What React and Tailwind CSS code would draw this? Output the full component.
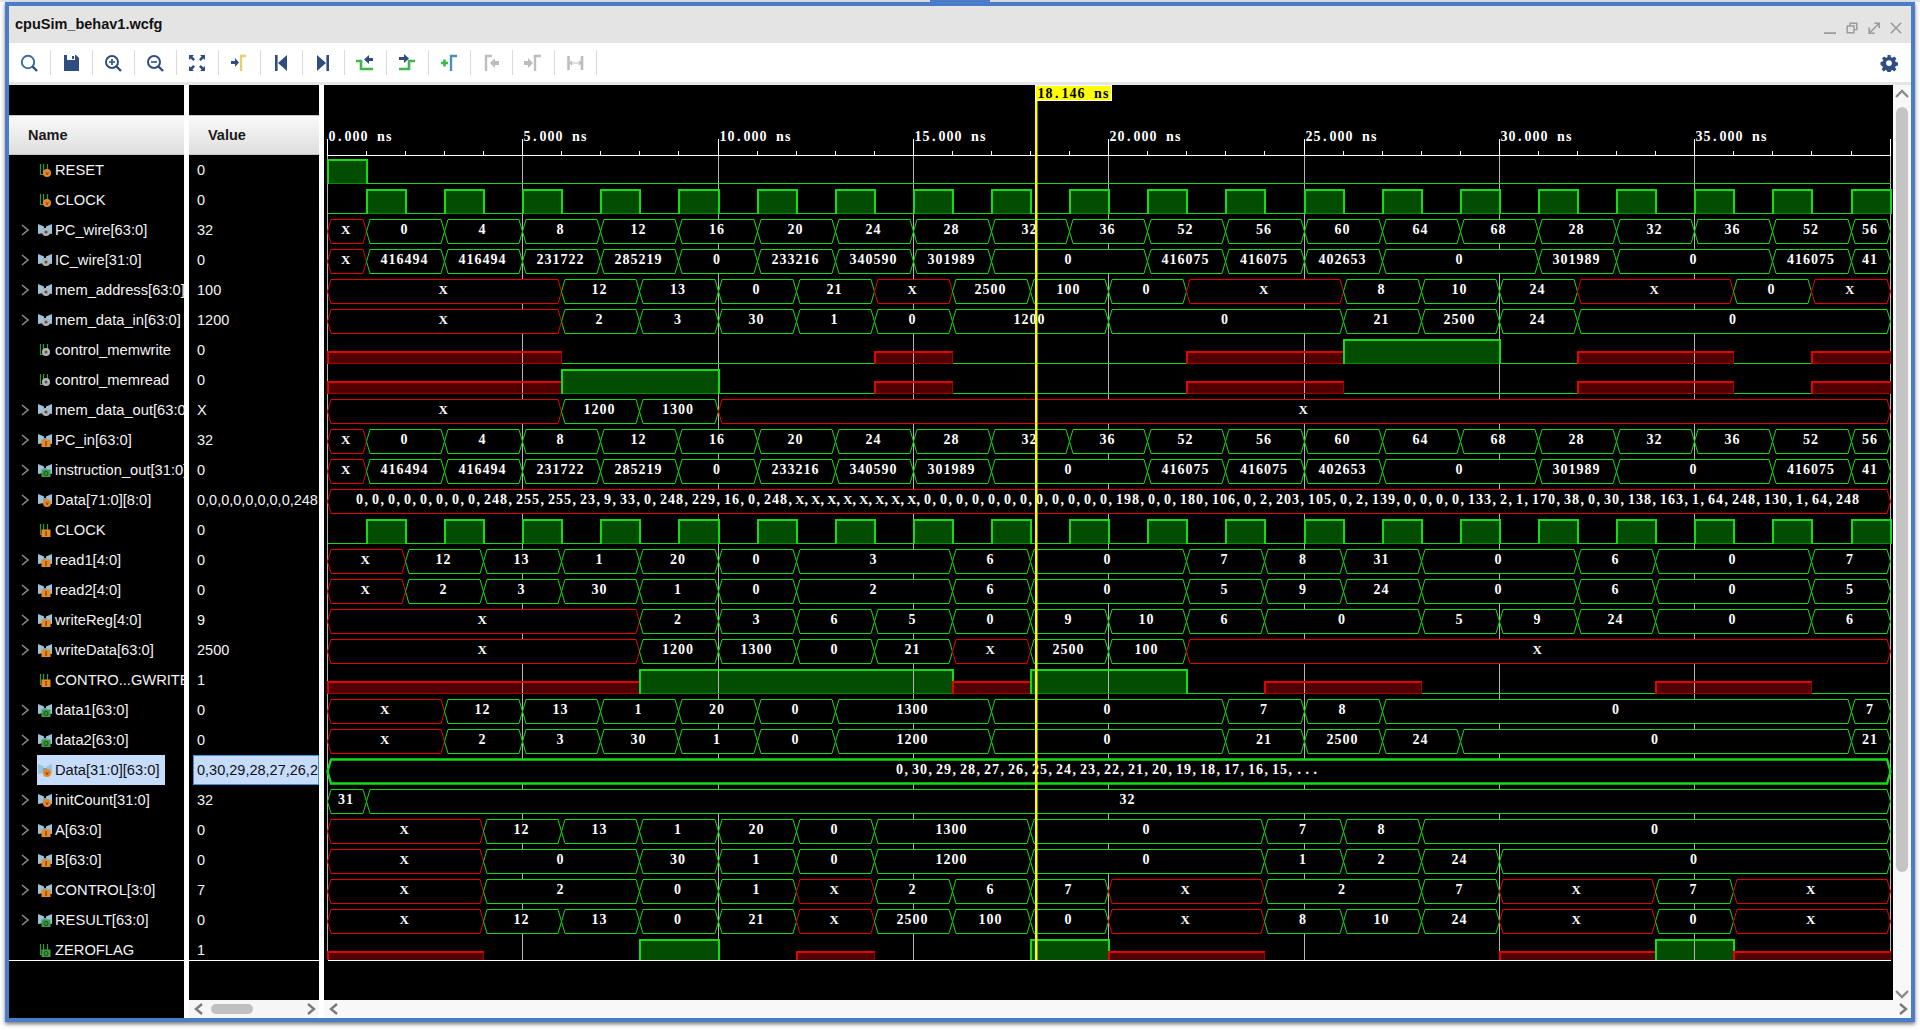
import React from "react";

const xt = (t) => Math.floor(327.3 + 39.07 * t);
const G = "#13dc13";
const R = "#e60000";

const clock = [];
for (let i = 0; i < 40; i++) clock.push([i + 1, i % 2 ? "1" : "0"]);

const pc = [[1,"X"],[3,"0"],[5,"4"],[7,"8"],[9,"12"],[11,"16"],[13,"20"],[15,"24"],[17,"28"],[19,"32"],[21,"36"],[23,"52"],[25,"56"],[27,"60"],[29,"64"],[31,"68"],[33,"28"],[35,"32"],[37,"36"],[39,"52"],[40,"56"]];
const ic = [[1,"X"],[3,"416494"],[5,"416494"],[7,"231722"],[9,"285219"],[11,"0"],[13,"233216"],[15,"340590"],[17,"301989"],[21,"0"],[23,"416075"],[25,"416075"],[27,"402653"],[31,"0"],[33,"301989"],[37,"0"],[39,"416075"],[40,"41"]];

const dataText = "0,0,0,0,0,0,0,0,248,255,255,23,9,33,0,248,229,16,0,248,X,X,X,X,X,X,X,X,0,0,0,0,0,0,0,0,0,0,0,0,198,0,0,180,106,0,2,203,105,0,2,139,0,0,0,0,133,2,1,170,38,0,30,138,163,1,64,248,130,1,64,248";

const rows = [
  { n: "RESET", i: "wv", v: "0", d: [[1,"1"],[40,"0"]] },
  { n: "CLOCK", i: "wv", v: "0", d: clock },
  { n: "PC_wire[63:0]", i: "bg", v: "32", b: pc },
  { n: "IC_wire[31:0]", i: "bg", v: "0", b: ic },
  { n: "mem_address[63:0]", i: "bg", v: "100", b: [[6,"X"],[8,"12"],[10,"13"],[12,"0"],[14,"21"],[16,"X"],[18,"2500"],[20,"100"],[22,"0"],[26,"X"],[28,"8"],[30,"10"],[32,"24"],[36,"X"],[38,"0"],[40,"X"]] },
  { n: "mem_data_in[63:0]", i: "bg", v: "1200", b: [[6,"X"],[8,"2"],[10,"3"],[12,"30"],[14,"1"],[16,"0"],[20,"1200"],[26,"0"],[28,"21"],[30,"2500"],[32,"24"],[40,"0"]] },
  { n: "control_memwrite", i: "wg", v: "0", d: [[6,"X"],[14,"0"],[16,"X"],[22,"0"],[26,"X"],[30,"1"],[32,"0"],[36,"X"],[38,"0"],[40,"X"]] },
  { n: "control_memread", i: "wg", v: "0", d: [[6,"X"],[10,"1"],[14,"0"],[16,"X"],[22,"0"],[26,"X"],[32,"0"],[36,"X"],[38,"0"],[40,"X"]] },
  { n: "mem_data_out[63:0]", i: "bg", v: "X", b: [[6,"X"],[8,"1200"],[10,"1300"],[40,"X"]] },
  { n: "PC_in[63:0]", i: "bi", v: "32", b: pc },
  { n: "instruction_out[31:0]", i: "bo", v: "0", b: ic },
  { n: "Data[71:0][8:0]", i: "bv", v: "0,0,0,0,0,0,0,0,248,255", b: [[40, dataText]], red: true },
  { n: "CLOCK", i: "wi", v: "0", d: clock },
  { n: "read1[4:0]", i: "bi", v: "0", b: [[2,"X"],[4,"12"],[6,"13"],[8,"1"],[10,"20"],[12,"0"],[16,"3"],[18,"6"],[22,"0"],[24,"7"],[26,"8"],[28,"31"],[32,"0"],[34,"6"],[38,"0"],[40,"7"]] },
  { n: "read2[4:0]", i: "bi", v: "0", b: [[2,"X"],[4,"2"],[6,"3"],[8,"30"],[10,"1"],[12,"0"],[16,"2"],[18,"6"],[22,"0"],[24,"5"],[26,"9"],[28,"24"],[32,"0"],[34,"6"],[38,"0"],[40,"5"]] },
  { n: "writeReg[4:0]", i: "bi", v: "9", b: [[8,"X"],[10,"2"],[12,"3"],[14,"6"],[16,"5"],[18,"0"],[20,"9"],[22,"10"],[24,"6"],[28,"0"],[30,"5"],[32,"9"],[34,"24"],[38,"0"],[40,"6"]] },
  { n: "writeData[63:0]", i: "bi", v: "2500", b: [[8,"X"],[10,"1200"],[12,"1300"],[14,"0"],[16,"21"],[18,"X"],[20,"2500"],[22,"100"],[40,"X"]] },
  { n: "CONTRO...GWRITE", i: "wi", v: "1", d: [[8,"X"],[16,"1"],[18,"X"],[22,"1"],[24,"0"],[28,"X"],[34,"0"],[38,"X"],[40,"0"]] },
  { n: "data1[63:0]", i: "bo", v: "0", b: [[3,"X"],[5,"12"],[7,"13"],[9,"1"],[11,"20"],[13,"0"],[17,"1300"],[23,"0"],[25,"7"],[27,"8"],[39,"0"],[40,"7"]] },
  { n: "data2[63:0]", i: "bo", v: "0", b: [[3,"X"],[5,"2"],[7,"3"],[9,"30"],[11,"1"],[13,"0"],[17,"1200"],[23,"0"],[25,"21"],[27,"2500"],[29,"24"],[39,"0"],[40,"21"]] },
  { n: "Data[31:0][63:0]", i: "bv", v: "0,30,29,28,27,26,25,24,23", sel: true, b: [[40,"0,30,29,28,27,26,25,24,23,22,21,20,19,18,17,16,15,..."]] },
  { n: "initCount[31:0]", i: "bv", v: "32", b: [[1,"31"],[40,"32"]] },
  { n: "A[63:0]", i: "bi", v: "0", b: [[4,"X"],[6,"12"],[8,"13"],[10,"1"],[12,"20"],[14,"0"],[18,"1300"],[24,"0"],[26,"7"],[28,"8"],[40,"0"]] },
  { n: "B[63:0]", i: "bi", v: "0", b: [[4,"X"],[8,"0"],[10,"30"],[12,"1"],[14,"0"],[18,"1200"],[24,"0"],[26,"1"],[28,"2"],[30,"24"],[40,"0"]] },
  { n: "CONTROL[3:0]", i: "bi", v: "7", b: [[4,"X"],[8,"2"],[10,"0"],[12,"1"],[14,"X"],[16,"2"],[18,"6"],[20,"7"],[24,"X"],[28,"2"],[30,"7"],[34,"X"],[36,"7"],[40,"X"]] },
  { n: "RESULT[63:0]", i: "bo", v: "0", b: [[4,"X"],[6,"12"],[8,"13"],[10,"0"],[12,"21"],[14,"X"],[16,"2500"],[18,"100"],[20,"0"],[24,"X"],[26,"8"],[28,"10"],[30,"24"],[34,"X"],[36,"0"],[40,"X"]] },
  { n: "ZEROFLAG", i: "wo", v: "1", d: [[4,"X"],[8,"0"],[10,"1"],[12,"0"],[14,"X"],[18,"0"],[20,"1"],[24,"X"],[30,"0"],[34,"X"],[36,"1"],[40,"X"]] },
];

const segs = (list) => {
  let s = 0;
  return list.map(([e, v]) => {
    const o = { s, e, v };
    s = e;
    return o;
  });
};

/* Fixed 8px pitch text in a serif face: every character gets its own x. */
function Pitch({ text, x, center, y, fill }) {
  const start = center !== undefined ? center - (text.length * 8) / 2 : x;
  const xs = Array.from(text, (c, k) => {
    const cell = start + k * 8;
    if (c === ".") return cell + 2;
    if (c === ",") return cell + 1;
    if (c === "X") return cell - 0.5;
    if (c === "n") return cell + 1;
    if (c === "s") return cell + 2;
    return cell + 0.5;
  });
  return (
    <text x={xs.join(" ")} y={y} fill={fill}>
      {text.split(/(X)/).map((p, k) =>
        p === "X" ? (
          <tspan key={k} fontSize="13">X</tspan>
        ) : (
          p
        )
      )}
    </text>
  );
}

function Badge({ kind }) {
  if (kind === "v")
    return (
      <g>
        <circle cx="9" cy="10" r="4" fill="#e8872a" />
        <text x="9" y="12" fontSize="5.5" textAnchor="middle" fill="#7a3c00">v</text>
      </g>
    );
  if (kind === "g")
    return (
      <g>
        <circle cx="8" cy="9" r="4" fill="#b4b4b4" />
        <circle cx="8" cy="9" r="1.6" fill="#555" />
      </g>
    );
  const c = kind === "i" ? "#ea8a22" : "#3f9a45";
  return (
    <g>
      <rect x="3.5" y="6.5" width="9" height="7.5" fill={c} />
      <text x="8" y="13" fontSize="6.5" textAnchor="middle" fill={kind === "i" ? "#5a2d00" : "#124d14"}>
        {kind === "i" ? "I" : "O"}
      </text>
    </g>
  );
}

function SigIcon({ t }) {
  const bus = t[0] === "b";
  return (
    <svg width="14" height="14" viewBox="0 0 14 14" className="shrink-0 font-['Liberation_Sans',sans-serif] font-bold">
      {bus ? (
        <g fill="#9cc3da">
          <polygon points="0,1 6,3.500 6,10 0,11" />
          <polygon points="14,1 8,3.500 8,10 14,11" />
          <rect x="5" y="5" width="4" height="4" fill="#7aa2b8" />
        </g>
      ) : (
        <path d="M2.500 1v10.500h3V1M9.500 1v7" fill="none" stroke="#2f9a3e" strokeWidth="1.2" />
      )}
      <Badge kind={t[1]} />
    </svg>
  );
}

const Chevron = ({ dir = "r", c = "#808080", w = 2 }) => (
  <svg width="10" height="14" viewBox="0 0 10 14" className="shrink-0">
    <polyline points={dir === "r" ? "2,2 8,7 2,12" : "8,2 2,7 8,12"} fill="none" stroke={c} strokeWidth={w} />
  </svg>
);

const NAVY = "#2f4d80";
const GRN = "#3fb74a";
const GY = "#bdbdbd";
const Lens = ({ children, big }) => (
  <>
    <circle cx="9" cy="9" r={big ? 6.2 : 6} fill="none" stroke={big ? "#3f6f9f" : NAVY} strokeWidth="2" />
    <line x1="13.5" y1="13.5" x2="18" y2="18" stroke={NAVY} strokeWidth="2.4" />
    {children}
  </>
);

const toolIcons = [
  <Lens big />,
  <path d="M3 2h12l3 3v13H3zM6 2v5h8V2zM11 3h2v3h-2z" fill={NAVY} fillRule="evenodd" />,
  <Lens><path d="M6 9h6M9 6v6" stroke={NAVY} strokeWidth="1.6" /></Lens>,
  <Lens><path d="M6 9h6" stroke={NAVY} strokeWidth="1.6" /></Lens>,
  <path d="M2 2h5L5.4 3.6 8 6.2 6.2 8 3.6 5.4 2 7zM18 2v5l-1.6-1.6L13.8 8 12 6.2l2.6-2.6L13 2zM2 18v-5l1.6 1.6L6.2 12 8 13.8l-2.6 2.6L7 18zM18 18h-5l1.6-1.6L12 13.8l1.8-1.8 2.6 2.6L18 13z" fill={NAVY} />,
  <>
    <path d="M12 18V3h5" fill="none" stroke="#e5cf6a" strokeWidth="2.4" />
    <path d="M2 8h4V5l4 4.5L6 14v-3H2z" fill={NAVY} />
  </>,
  <path d="M4 2h2.6v16H4zM16 2v16L7 10z" fill={NAVY} />,
  <path d="M13.4 2H16v16h-2.6zM4 2v16l9-8z" fill={NAVY} />,
  <>
    <path d="M1 8h5v8h12" fill="none" stroke={GRN} strokeWidth="2.6" />
    <path d="M18 5h-4V2l-5 4.5 5 4.5V8h4z" fill={NAVY} />
  </>,
  <>
    <path d="M2 16h10V8h6" fill="none" stroke={GRN} strokeWidth="2.6" />
    <path d="M2 4h5V1l5 4.5L7 10V7H2z" fill={NAVY} />
  </>,
  <>
    <path d="M2 10h7M5.5 6.5v7" stroke={GRN} strokeWidth="2.6" />
    <path d="M12 18V3h6" fill="none" stroke="#4a8fc0" strokeWidth="2.4" />
  </>,
  <>
    <path d="M5 18V3h6" fill="none" stroke={GY} strokeWidth="2.4" />
    <path d="M18 8h-4V5l-5 5 5 5v-3h4z" fill={GY} />
  </>,
  <>
    <path d="M12 18V3h6" fill="none" stroke={GY} strokeWidth="2.4" />
    <path d="M1 8h4V5l5 5-5 5v-3H1z" fill={GY} />
  </>,
  <>
    <path d="M3.5 3v14M17 3v14" stroke={GY} strokeWidth="2.6" fill="none" />
    <path d="M5 10h11M7 8l-2 2 2 2M14 8l2 2-2 2" stroke={GY} strokeWidth="1.2" fill="none" />
  </>,
];

function Wave() {
  const H = 960;
  return (
    <svg
      width="1569"
      height="915"
      viewBox="324 85 1569 915"
      className="block shrink-0 bg-black font-['Liberation_Serif',serif] font-bold text-[14px]"
    >
      <defs>
        <clipPath id="wv">
          <rect x="324" y="85" width="1569" height="875" />
        </clipPath>
      </defs>

      {/* digital fills */}
      <g clipPath="url(#wv)" shapeRendering="crispEdges">
        {rows.map((r, i) =>
          r.d
            ? segs(r.d).map((s, k) => {
                const top = 159 + 30 * i;
                const bot = 183 + 30 * i;
                const mid = 171 + 30 * i;
                const x0 = xt(s.s);
                const x1 = xt(s.e);
                if (s.v === "1") return <rect key={`${i}-${k}`} x={x0} y={top} width={x1 - x0} height={bot - top} fill="#024d02" />;
                if (s.v === "X") return <rect key={`${i}-${k}`} x={x0} y={mid} width={x1 - x0} height={bot - mid} fill="#500000" />;
                return null;
              })
            : null
        )}
      </g>

      {/* grid */}
      <g shapeRendering="crispEdges">
        {Array.from({ length: 9 }, (_, k) => (
          <line key={k} x1={xt(k * 5) + 0.5} x2={xt(k * 5) + 0.5} y1="139" y2={H} stroke="#b4b4b4" />
        ))}
      </g>

      {/* signals */}
      <g clipPath="url(#wv)">
        {rows.map((r, i) => {
          const top = 159.5 + 30 * i;
          const bot = 183.5 + 30 * i;
          const mid = 171.5 + 30 * i;
          if (r.b)
            return (
              <g key={i}>
                {segs(r.b).map((s, k) => {
                  const x0 = xt(s.s) + 0.5;
                  const x1 = xt(s.e) + 0.5;
                  const c = s.v === "X" || r.red ? R : G;
                  const m = 3.5;
                  return (
                    <g key={k}>
                      <polygon
                        points={`${x0},${mid} ${x0 + m},${top} ${x1 - m},${top} ${x1},${mid} ${x1 - m},${bot} ${x0 + m},${bot}`}
                        fill="#000"
                        stroke={c}
                        strokeWidth={r.sel ? 2.4 : 1}
                      />
                      <Pitch text={s.v} center={(xt(s.s) + xt(s.e)) / 2 - 1} y={top + 14.5} fill="#fff" />
                    </g>
                  );
                })}
              </g>
            );
          const list = segs(r.d);
          return (
            <g key={i} shapeRendering="crispEdges" fill="none">
              {list.map((s, k) => {
                const x0 = xt(s.s) + 0.5;
                const x1 = xt(s.e) + 0.5;
                if (s.v === "0") return <line key={k} x1={x0} x2={x1} y1={bot} y2={bot} stroke={G} />;
                if (s.v === "1")
                  return (
                    <g key={k}>
                      <line x1={x0} x2={x1} y1={bot} y2={bot} stroke="#0a8a0a" />
                      <path d={`M${x0} ${bot}V${top}H${x1}V${bot}`} stroke={G} strokeWidth="2" />
                    </g>
                  );
                return (
                  <g key={k}>
                    <line x1={x0} x2={x1} y1={bot} y2={bot} stroke="#a00000" />
                    <path d={`M${x0} ${bot}V${mid}H${x1}`} stroke={R} strokeWidth="2" />
                    <line x1={x1} x2={x1} y1={mid} y2={bot} stroke="#a00000" />
                  </g>
                );
              })}
            </g>
          );
        })}
      </g>

      {/* axis */}
      <g shapeRendering="crispEdges">
        <line x1="327" x2="1891" y1="155.5" y2="155.5" stroke="#fff" />
        {Array.from({ length: 41 }, (_, k) => (
          <line key={k} x1={xt(k) + 0.5} x2={xt(k) + 0.5} y1={k % 5 ? 151 : 139} y2="155" stroke="#fff" />
        ))}
        <line x1="327.5" x2="1890.5" y1="960.5" y2="960.5" stroke="#fff" />
      </g>
      {Array.from({ length: 8 }, (_, k) => (
        <Pitch key={k} text={`${k * 5}.000 ns`} x={xt(k * 5) + 1} y={141} fill="#fff" />
      ))}

      {/* cursor */}
      <rect x="1035" y="100" width="2.5" height="860" fill="#ffff00" />
      <rect x="1035.5" y="85.5" width="76" height="15" fill="#ffff00" stroke="#fff" />
      <Pitch text="18.146 ns" x={1037} y={98} fill="#000" />
    </svg>
  );
}

export default function App() {
  return (
    <div className="w-[1920px] h-[1030px] bg-white overflow-hidden pl-[5px] font-['Liberation_Sans',Arial,sans-serif]">
      <div className="h-[2px] -ml-[5px] bg-[#dfe3ea] flex">
        <div className="ml-[930px] w-[60px] h-[2px] bg-[#4b7cc7]" />
      </div>
      <div className="w-[1910px] h-[1020px] flex flex-col border-4 border-[#4b7cc7] shadow-[0_2px_4px_rgba(0,0,0,0.55)]">
        {/* title bar */}
        <div className="h-[37px] shrink-0 bg-[#e4e4e4] flex items-center pl-[6px] pr-[9px]">
          <span className="text-[14.5px] font-bold text-[#111]">cpuSim_behav1.wcfg</span>
          <div className="ml-auto flex items-center gap-[10px] mt-[7px]">
            {[
              <path d="M0 14h15" stroke="#9a9a9a" strokeWidth="2.4" />,
              <path d="M5 4.5V1.5h8.5v8H10M1.5 5h8.5v8.5H1.5z" fill="none" stroke="#9a9a9a" strokeWidth="1.8" />,
              <path d="M8 1.5h6v6M14 1.5L3 12.5M1.500 7v7h7" fill="none" stroke="#9a9a9a" strokeWidth="2" />,
              <path d="M1 1l13 13M14 1L1 14" stroke="#9a9a9a" strokeWidth="2" />,
            ].map((p, k) => (
              <svg key={k} width="12" height="12" viewBox="0 0 15 15">{p}</svg>
            ))}
          </div>
        </div>

        {/* toolbar */}
        <div className="h-[42px] shrink-0 bg-white border-b-[3px] border-[#e6e6e6] flex items-center">
          {toolIcons.map((ic, k) => (
            <div key={k} className="w-[42px] h-[25px] pr-[2px] flex items-center justify-center border-r-[1.5px] border-[#dadada]">
              <svg width="20" height="20" viewBox="0 0 20 20">{ic}</svg>
            </div>
          ))}
          <svg className="ml-auto mr-[13px]" width="18" height="18" viewBox="0 0 18 18">
            <path
              d="M7.5 1h3l.4 2.2 1.5.6L14.300 2.500l2.100 2.100-1.300 1.900.6 1.500 2.300.500v3l-2.300.400-.6 1.500 1.300 1.900-2.100 2.100-1.900-1.300-1.500.6-.4 2.300h-3l-.4-2.300-1.500-.6-1.900 1.300-2.100-2.100 1.300-1.900-.6-1.500L.5 11V8l2.200-.5.6-1.500L2 4.600l2.100-2.100L6 3.800l1.500-.6zM9 6.200a2.900 2.900 0 100 5.800 2.900 2.900 0 000-5.800z"
              fill={NAVY}
              fillRule="evenodd"
            />
          </svg>
        </div>

        {/* main */}
        <div className="flex-1 flex bg-white min-h-0">
          {/* names */}
          <div className="w-[175px] shrink-0 bg-black flex flex-col">
            <div className="h-[30px] shrink-0" />
            <div className="h-[40px] shrink-0 bg-linear-to-b from-[#fafafa] to-[#dedede] border-y border-[#c8c8c8] flex items-center pl-[19px] pt-[2px] text-[14.5px] font-bold text-[#1a1a1a]">
              Name
            </div>
            <div className="h-[806px] shrink-0 overflow-hidden border-b border-white">
              {rows.map((r, i) => (
                <div key={i} className="h-[30px] flex items-center whitespace-nowrap text-[14.7px]">
                  <div className="w-[28px] shrink-0 flex justify-end pr-[7px]">
                    {r.b ? <Chevron c="#8a8a8a" w={1.6} /> : null}
                  </div>
                  <div className={`h-full flex items-center gap-[3px] pl-[1px] ${r.sel ? "w-[128px] bg-[#c6dcfb] text-[#111]" : "text-[#f4f4f4]"}`}>
                    <SigIcon t={r.i} />
                    <span>{r.n}</span>
                  </div>
                </div>
              ))}
            </div>
          </div>

          {/* values */}
          <div className="w-[130px] ml-[5px] shrink-0 bg-black flex flex-col">
            <div className="h-[30px] shrink-0" />
            <div className="h-[40px] shrink-0 bg-linear-to-b from-[#fafafa] to-[#dedede] border-y border-[#c8c8c8] flex items-center pl-[19px] pt-[2px] text-[14.5px] font-bold text-[#1a1a1a]">
              Value
            </div>
            <div className="h-[806px] shrink-0 overflow-hidden border-b border-white">
              {rows.map((r, i) => (
                <div key={i} className="h-[30px] flex items-center pl-[4px] whitespace-nowrap text-[14.5px]">
                  <div className={`h-full w-full flex items-center px-[3px] pt-[1px] overflow-hidden ${r.sel ? "bg-[#c6dcfb] text-[#111] border border-[#3d8fd6]" : "border border-transparent text-[#f4f4f4]"}`}>
                    {r.v}
                  </div>
                </div>
              ))}
            </div>
            <div className="flex-1" />
            <div className="h-[18px] shrink-0 bg-[#f6f6f6] flex items-center pl-[5px] pr-[3px]">
              <Chevron dir="l" c="#7a7a7a" w={2.4} />
              <div className="ml-[7px] w-[42px] h-[10px] rounded-full bg-[#c0c0c0]" />
              <div className="ml-auto">
                <Chevron c="#7a7a7a" w={2.4} />
              </div>
            </div>
          </div>

          {/* waves */}
          <div className="w-[1587px] ml-[5px] shrink-0 flex flex-col">
            <div className="flex h-[915px] shrink-0">
              <Wave />
              <div className="w-[18px] shrink-0 bg-[#f8f8f8] flex flex-col items-center pt-[4px] pb-[1px]">
                <svg width="14" height="10" viewBox="0 0 14 10">
                  <polyline points="1,8 7,2 13,8" fill="none" stroke="#8a8a8a" strokeWidth="2.4" />
                </svg>
                <div className="mt-[8px] w-[12px] h-[765px] rounded-full bg-[#c4c4c4]" />
                <svg className="mt-auto" width="14" height="10" viewBox="0 0 14 10">
                  <polyline points="1,2 7,8 13,2" fill="none" stroke="#8a8a8a" strokeWidth="2.4" />
                </svg>
              </div>
            </div>
            <div className="h-[18px] shrink-0 bg-[#f8f8f8] flex items-center pl-[5px] pr-[3px]">
              <Chevron dir="l" c="#7a7a7a" w={2.4} />
              <div className="ml-auto">
                <Chevron c="#7a7a7a" w={2.4} />
              </div>
            </div>
          </div>
        </div>
      </div>
    </div>
  );
}
